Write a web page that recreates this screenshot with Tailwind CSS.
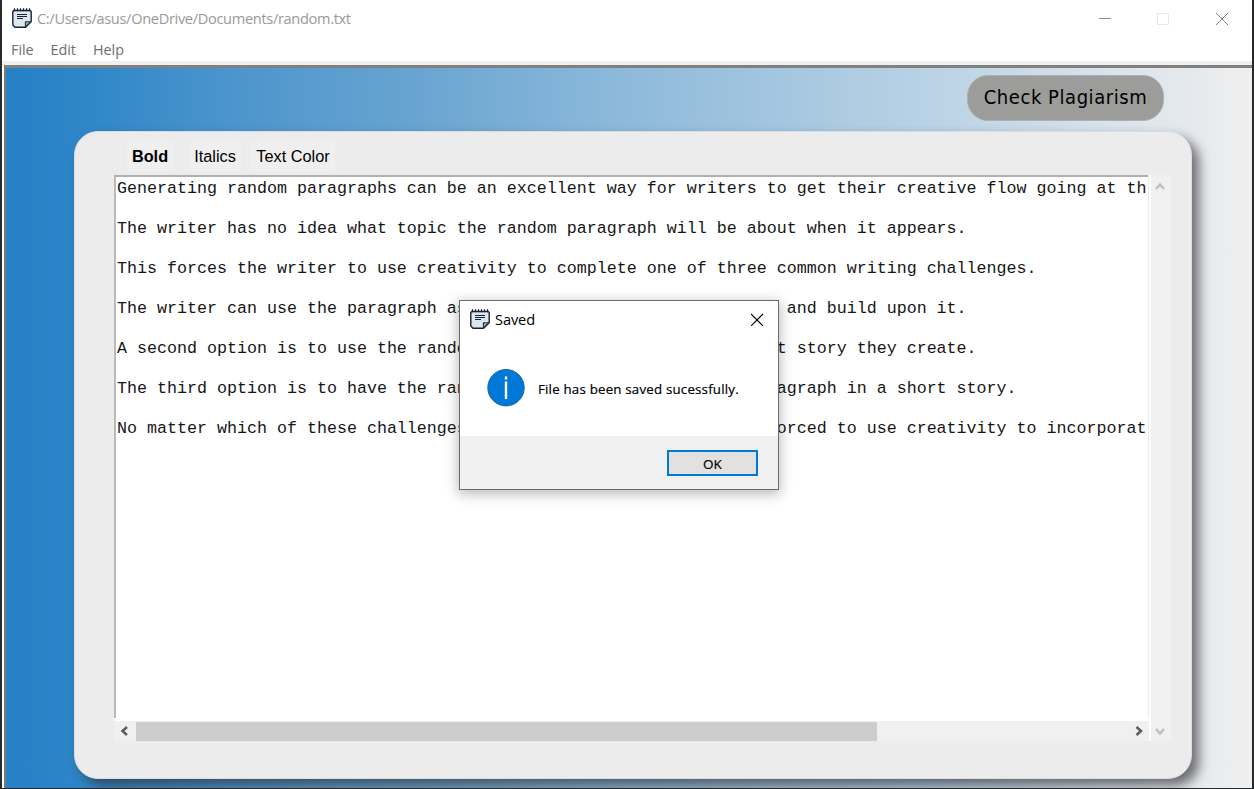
<!DOCTYPE html>
<html lang="en">
<head>
<meta charset="utf-8">
<title>random.txt</title>
<script src="https://cdn.jsdelivr.net/npm/@tailwindcss/browser@4"></script>
</head>
<body class="w-[1254px] h-[789px] overflow-hidden bg-[#28292b] font-['Open_Sans','Noto_Sans',sans-serif]">
<svg class="hidden">
  <symbol id="note" viewBox="0 0 20 20">
    <path d="M1.8 2.5h16.4l1 1v10.2l-5.7 5.5H3L.8 17V3.5z" fill="#dce8eb" stroke="#1a2238" stroke-width="1.4"/>
    <path d="M13.4 18.8v-5h5.3z" fill="#91b5bd" stroke="#1a2238" stroke-width="1"/>
    <path d="M2.5.2v3M5.5.2v3M8.5.2v3M11.5.2v3M14.5.2v3M17.5.2v3" stroke="#1a2238" stroke-width="1.2"/>
    <path d="M5 6.5h10M5 8.500h10M5 10.500h6" stroke="#1a2238" stroke-width="1"/>
  </symbol>
</svg>
<div class="relative w-[1250px] h-[788px] ml-[2px] bg-white flex flex-col">
  <header class="h-[37px] shrink-0 flex items-center pl-[10px] pr-[23px]">
    <svg class="w-5 h-5 mt-[-1px]"><use href="#note"/></svg>
    <span class="ml-[5px] mt-[-2px] text-[14.600px] leading-5 tracking-[-0.33px] text-[#999999] whitespace-nowrap">C:/Users/asus/OneDrive/Documents/random.txt</span>
    <div class="ml-auto flex items-center gap-[46px]">
      <svg class="w-[13px] h-[13px]" viewBox="0 0 13 13"><path d="M1 6.500h12" stroke="#8c8c8c"/></svg>
      <svg class="w-[13px] h-[13px]" viewBox="0 0 13 13"><path d="M.5 1.500h11v11H.5z" fill="none" stroke="#e8e8e8"/></svg>
      <svg class="w-[13px] h-[13px]" viewBox="0 0 13 13"><path d="M0 1l12 12M12 1L0 13" stroke="#808080"/></svg>
    </div>
  </header>
  <nav class="h-[24px] shrink-0 flex items-center pl-[9px] pt-[2px] gap-[17px] text-[14.400px] tracking-[-0.05px] text-[#6e6e6e]">
    <span>File</span><span>Edit</span><span>Help</span>
  </nav>
  <div class="h-[4px] shrink-0 bg-[#f0f0f0]"></div>
  <main class="ml-[2px] flex-1 min-h-0 overflow-hidden border-t-[3px] border-l-[2px] border-t-[#808080] border-l-[#7a7a7a] bg-[linear-gradient(90deg,#2580c5_0px,#2e86c7_75px,#4d95cd_230px,#66a3d0_394px,#8bb8da_600px,#bbd3e5_934px,#d9e3eb_1100px,#e5e9ed_1180px,#efefef_1246px)] flex flex-col">
    <div class="h-[63px] shrink-0 flex justify-end pr-[88px] pt-[7px]">
      <button class="w-[197px] h-[46px] rounded-[21px] bg-[#9c9c9a] border border-[#adafb0] text-black pb-[2px] text-[20px] leading-5 tracking-[0.55px] font-['DejaVu_Sans_Condensed','DejaVu_Sans',sans-serif] [font-stretch:condensed] whitespace-nowrap">Check Plagiarism</button>
    </div>
    <section class="ml-[68px] w-[1118px] h-[648px] shrink-0 rounded-[24px] bg-[#ececec] border border-[#d8dde2] shadow-[7px_7px_12px_0_rgba(45,46,50,0.66)]">
      <div class="h-[43px] pt-[9px] pl-[52px] flex gap-[10px] font-['Liberation_Sans',sans-serif] text-[16.300px] leading-[30px] text-black">
        <span class="w-[46px] h-[30px] bg-[#efefef] text-center font-bold">Bold</span>
        <span class="ml-[6px] w-[52px] h-[30px] bg-[#efefef] text-center">Italics</span>
        <span class="w-[84px] h-[30px] bg-[#efefef] text-center whitespace-nowrap">Text Color</span>
      </div>
      <div class="ml-[39px] w-[1057px] h-[566px] flex">
        <div class="w-[1035px] shrink-0 flex flex-col">
          <div class="h-[543px] w-[1034px] shrink-0 border-t-2 border-l-2 border-t-[#b0b0b0] border-l-[#bababa] bg-white overflow-hidden">
            <pre class="pl-px pt-[2px] text-[16.667px] leading-5 text-[#161616] font-['Liberation_Mono',monospace] h-[541px] overflow-hidden">Generating random paragraphs can be an excellent way for writers to get their creative flow going at th

The writer has no idea what topic the random paragraph will be about when it appears.

This forces the writer to use creativity to complete one of three common writing challenges.

The writer can use the paragraph as the first one of a short story and build upon it.

A second option is to use the random paragraph somewhere in a short story they create.

The third option is to have the random paragraph be the ending paragraph in a short story.

No matter which of these challenges are used, the writer will be forced to use creativity to incorporat</pre>
          </div>
          <div class="h-[3px] bg-white shrink-0"></div>
          <div class="h-[20px] flex items-center bg-[#f0f0f0]">
            <svg class="w-[22px] h-5" viewBox="0 0 22 20"><path d="M13 6L8.500 10l4.500 4" fill="none" stroke="#5c5c5c" stroke-width="2.500"/></svg>
            <div class="w-[741px] h-[19px] bg-[#cdcdcd]"></div>
            <svg class="ml-auto w-[19px] h-5" viewBox="0 0 19 20"><path d="M6.500 6L11 10l-4.500 4" fill="none" stroke="#5c5c5c" stroke-width="2.500"/></svg>
          </div>
        </div>
        <div class="w-[2px] shrink-0 bg-white"></div>
        <div class="w-[20px] shrink-0 bg-[#f0f0f0] flex flex-col justify-between">
          <svg class="w-5 h-5" viewBox="0 0 20 20"><path d="M5 14l4-4.500 4 4.500" fill="none" stroke="#bdbdbd" stroke-width="2.300"/></svg>
          <svg class="w-5 h-5" viewBox="0 0 20 20"><path d="M5 8l4 4.500 4-4.500" fill="none" stroke="#bdbdbd" stroke-width="2.300"/></svg>
        </div>
      </div>
    </section>
  </main>

  <div role="dialog" class="absolute left-[457px] top-[300px] w-[320px] h-[190px] bg-white border border-[#6b6b6b] shadow-[0_3px_12px_1px_rgba(0,0,0,0.28)] flex flex-col text-black">
    <div class="h-[37px] flex items-center pl-[10px] pr-[14px]">
      <svg class="w-5 h-5 mt-[-1px]"><use href="#note"/></svg>
      <span class="ml-[5px] mt-[-2px] text-[14.600px] leading-5 tracking-[-0.1px]">Saved</span>
      <svg class="ml-auto w-[13px] h-[13px]" viewBox="0 0 13 13"><path d="M0 1l12 12M12 1L0 13" stroke="#000" stroke-width="1.100"/></svg>
    </div>
    <div class="h-[98px] flex items-start pl-[27px] pt-[31px]">
      <svg class="w-[38px] h-[38px]" viewBox="0 0 38 38"><circle cx="19" cy="18.700" r="18.200" fill="#0078d7" stroke="#1766a8" stroke-width="1"/><path d="M19 12.500v17.500M19 7.500v3" stroke="#fff" stroke-width="2.400"/></svg>
      <span class="ml-[13px] mt-[10px] text-[13.300px] leading-5 tracking-[0.2px] whitespace-nowrap [-webkit-text-stroke:0.2px_#000]">File has been saved sucessfully.</span>
    </div>
    <div class="flex-1 bg-[#f0f0f0] flex justify-end pt-[14px] pr-[20px]">
      <button class="w-[91px] h-[26px] border-2 border-[#0078d7] bg-[#e1e1e1] text-[13.500px] leading-5 pt-px [-webkit-text-stroke:0.2px_#000]">OK</button>
    </div>
  </div>
</div>
</body>
</html>
